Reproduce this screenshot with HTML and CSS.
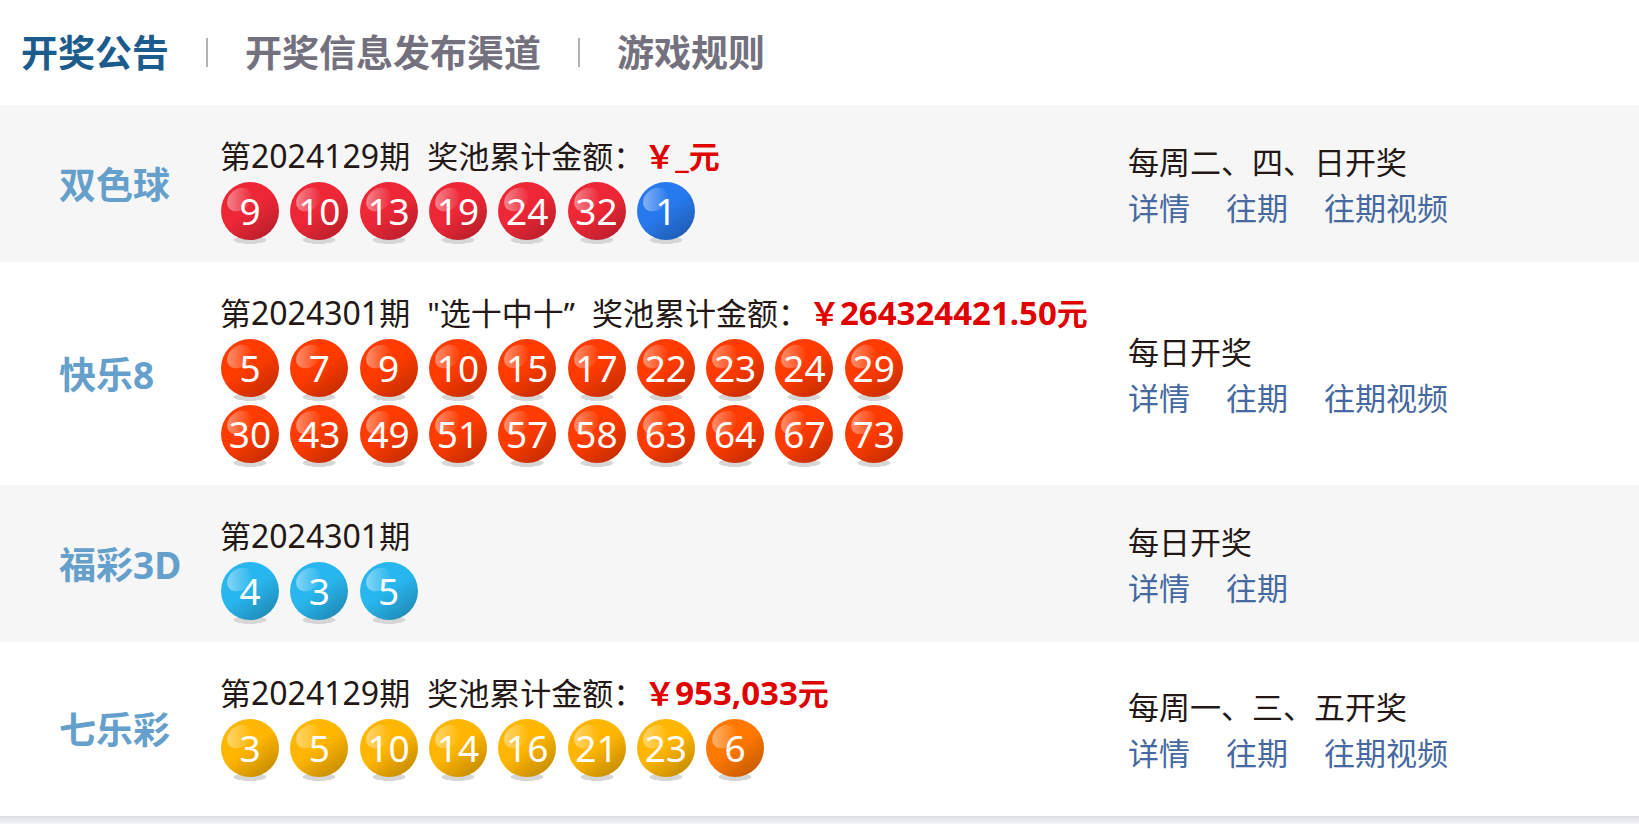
FILE: index.html
```html
<!DOCTYPE html>
<html lang="zh-CN">

<head>
    <meta charset="UTF-8">
    <meta name="viewport" content="width=device-width, initial-scale=1.0">
    <title>开奖公告</title>
    <link rel="stylesheet" href="styles.css">
</head>

<body>
    <main class="container">
        <nav class="tabs">
            <a class="tab active" href="#notice">开奖公告</a>
            <a class="tab" href="#channel">开奖信息发布渠道</a>
            <a class="tab" href="#rules">游戏规则</a>
        </nav>

        <section class="game">
            <h2>双色球</h2>
            <div class="result">
                <p class="issue"><span>第<span class="number">2024129</span>期</span><span>奖池累计金额：<strong>￥<span class="money">_</span>元</strong></span></p>
                <ul class="balls">
                    <li class="ball red">9</li>
                    <li class="ball red">10</li>
                    <li class="ball red">13</li>
                    <li class="ball red">19</li>
                    <li class="ball red">24</li>
                    <li class="ball red">32</li>
                    <li class="ball blue">1</li>
                </ul>
            </div>
            <div class="info">
                <p>每周二、四、日开奖</p>
                <div class="links">
                    <a href="#">详情</a>
                    <a href="#">往期</a>
                    <a href="#">往期视频</a>
                </div>
            </div>
        </section>

        <section class="game">
            <h2>快乐8</h2>
            <div class="result">
                <p class="issue"><span>第<span class="number">2024301</span>期</span><span>"选十中十”</span><span>奖池累计金额：<strong>￥<span class="money">264324421.50</span>元</strong></span></p>
                <ul class="balls">
                    <li class="ball scarlet">5</li>
                    <li class="ball scarlet">7</li>
                    <li class="ball scarlet">9</li>
                    <li class="ball scarlet">10</li>
                    <li class="ball scarlet">15</li>
                    <li class="ball scarlet">17</li>
                    <li class="ball scarlet">22</li>
                    <li class="ball scarlet">23</li>
                    <li class="ball scarlet">24</li>
                    <li class="ball scarlet">29</li>
                    <li class="ball scarlet">30</li>
                    <li class="ball scarlet">43</li>
                    <li class="ball scarlet">49</li>
                    <li class="ball scarlet">51</li>
                    <li class="ball scarlet">57</li>
                    <li class="ball scarlet">58</li>
                    <li class="ball scarlet">63</li>
                    <li class="ball scarlet">64</li>
                    <li class="ball scarlet">67</li>
                    <li class="ball scarlet">73</li>
                </ul>
            </div>
            <div class="info">
                <p>每日开奖</p>
                <div class="links">
                    <a href="#">详情</a>
                    <a href="#">往期</a>
                    <a href="#">往期视频</a>
                </div>
            </div>
        </section>

        <section class="game">
            <h2>福彩3D</h2>
            <div class="result">
                <p class="issue"><span>第<span class="number">2024301</span>期</span></p>
                <ul class="balls">
                    <li class="ball cyan">4</li>
                    <li class="ball cyan">3</li>
                    <li class="ball cyan">5</li>
                </ul>
            </div>
            <div class="info">
                <p>每日开奖</p>
                <div class="links">
                    <a href="#">详情</a>
                    <a href="#">往期</a>
                </div>
            </div>
        </section>

        <section class="game">
            <h2>七乐彩</h2>
            <div class="result">
                <p class="issue"><span>第<span class="number">2024129</span>期</span><span>奖池累计金额：<strong>￥<span class="money">953,033</span>元</strong></span></p>
                <ul class="balls">
                    <li class="ball yellow">3</li>
                    <li class="ball yellow">5</li>
                    <li class="ball yellow">10</li>
                    <li class="ball yellow">14</li>
                    <li class="ball yellow">16</li>
                    <li class="ball yellow">21</li>
                    <li class="ball yellow">23</li>
                    <li class="ball orange">6</li>
                </ul>
            </div>
            <div class="info">
                <p>每周一、三、五开奖</p>
                <div class="links">
                    <a href="#">详情</a>
                    <a href="#">往期</a>
                    <a href="#">往期视频</a>
                </div>
            </div>
        </section>
    </main>
</body>

</html>
```

FILE: styles.css
```css
* {
    box-sizing: border-box;
    margin: 0;
    padding: 0;
}

body {
    font-family: "Noto Sans", "Noto Sans CJK SC", sans-serif;
    font-size: 31px;
    line-height: 40px;
    color: #231815;
    background: #f5f5fb;
}

/* soft shadow under the card */
body::after {
    content: "";
    display: block;
    height: 8px;
    background: linear-gradient(#dcdee4, #f4f4fa);
}

a {
    text-decoration: none;
}

.container {
    background: #fff;
}

.tabs {
    display: flex;
    align-items: center;
    height: 105px;
    padding-left: 21px;
}

.tab {
    display: flex;
    align-items: center;
    font-size: 37px;
    font-weight: 700;
    color: #74717f;
    white-space: nowrap;
}

.tab.active {
    color: #1b5c8c;
}

/* separator between tabs */
.tab + .tab::before {
    content: "";
    width: 2px;
    height: 29px;
    margin: 0 37px;
    background: #b3b3b3;
}

.game {
    display: grid;
    grid-template-columns: 161px 908px 1fr;
    align-items: center;
    padding-left: 59px;
}

.game:nth-of-type(odd) {
    background: #f6f6f6;
}

.game h2 {
    padding-top: 2px;
    font-size: 37px;
    color: #659fcb;
    white-space: nowrap;
}

.result {
    padding: 31px 0 18px;
}

.game:last-child .result {
    padding-bottom: 35px;
}

.issue {
    display: flex;
    gap: 17px;
    margin-bottom: 6px;
    height: 40px;
    white-space: nowrap;
}

.issue strong {
    color: #e00000;
}

.number {
    font-size: 32px;
}

.money {
    font-size: 33px;
}

.balls {
    display: grid;
    grid-template-columns: repeat(10, 1fr);
    row-gap: 4px;
    width: 693px;
    margin-left: 1px;
    list-style: none;
}

.ball {
    position: relative;
    z-index: 0;
    width: 58px;
    height: 62px;
    font-size: 37px;
    line-height: 58px;
    text-align: center;
    color: #fff;
    background: radial-gradient(ellipse 17px 4px at 29px 58px, #d6d6d6 92%, transparent);
}

.ball::before {
    content: "";
    position: absolute;
    z-index: -2;
    top: 0;
    left: 0;
    width: 58px;
    height: 58px;
    border-radius: 50%;
    background: linear-gradient(145deg, var(--light) 48%, var(--dark) 90%);
}

/* glossy highlight */
.ball::after {
    content: "";
    position: absolute;
    z-index: -1;
    top: 7px;
    left: 5px;
    width: 27px;
    height: 21px;
    border-radius: 50%;
    background: linear-gradient(130deg, rgba(255, 255, 255, 0.5), rgba(255, 255, 255, 0) 90%);
    transform: rotate(-40deg);
}

.red {
    --light: #ee2737;
    --dark: #b71f2a;
}

.blue {
    --light: #2779ee;
    --dark: #205cb0;
}

.scarlet {
    --light: #ff3b00;
    --dark: #c42d00;
}

.cyan {
    --light: #28b6ee;
    --dark: #208ab6;
}

.yellow {
    --light: #ffb600;
    --dark: #c48c00;
}

.orange {
    --light: #ff7800;
    --dark: #c45c00;
}

.info {
    padding-top: 2px;
    line-height: 46px;
    white-space: nowrap;
}

.links {
    display: flex;
    gap: 36px;
}

.links a {
    color: #4569a0;
}
```
